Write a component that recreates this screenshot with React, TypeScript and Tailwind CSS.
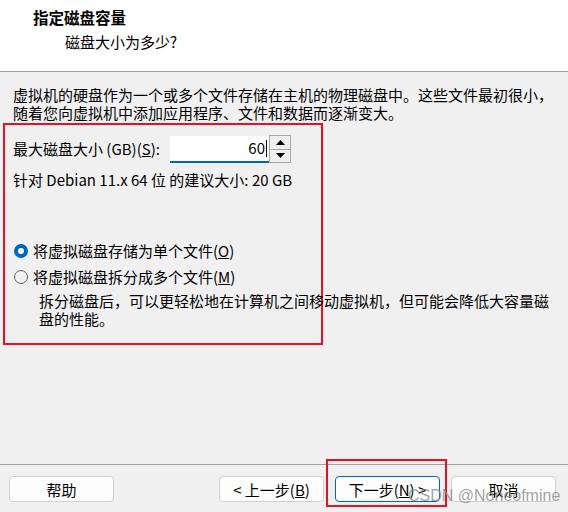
import { useState } from "react";

const font = { fontFamily: '"Noto Sans CJK SC", "Noto Sans", sans-serif' };

function Radio({ checked }: { checked: boolean }) {
	return checked ? (
		<span className="inline-flex h-[14px] w-[14px] items-center justify-center rounded-full bg-[#0067c0]">
			<span className="h-[6px] w-[6px] rounded-full bg-white" />
		</span>
	) : (
		<span className="inline-block h-[14px] w-[14px] rounded-full border border-[#5f5f5f] bg-[#f0f0f0]" />
	);
}

function Btn({ children, primary }: { children: React.ReactNode; primary?: boolean }) {
	return (
		<button
			className={
				"h-[26px] w-[105px] rounded-[4px] border bg-[#fdfdfd] text-[15px] leading-none text-black " +
				(primary ? "border-[#0067c0]" : "border-[#d0d0d0]")
			}
		>
			{children}
		</button>
	);
}

export default function App() {
	const [split, setSplit] = useState(false);
	return (
		<div className="relative flex h-[512px] w-[568px] flex-col overflow-hidden bg-[#f0f0f0] text-black" style={font}>
			<div className="h-[72px] shrink-0 border-b border-[#a0a0a0] bg-white pt-[7px]">
				<p className="pl-[33px] text-[15.5px] font-bold leading-[20px]">指定磁盘容量</p>
				<p className="pl-[65px] pt-[5px] text-[15px] leading-[20px]">磁盘大小为多少?</p>
			</div>

			<div className="flex-1 pt-[14px]">
				<p className="pl-[13px] text-[15px] leading-[18px]">
					虚拟机的硬盘作为一个或多个文件存储在主机的物理磁盘中。这些文件最初很小，
					<br />
					随着您向虚拟机中添加应用程序、文件和数据而逐渐变大。
				</p>

				<div className="ml-[3px] mt-[1px] h-[222px] w-[320px] border-2 border-[#e81123] pl-[8px] pt-[10px]">
					<div className="flex items-center">
						<span className="w-[157px] text-[15px]">
							最大磁盘大小 (GB)(<span className="underline">S</span>):
						</span>
						<div className="flex h-[27px] w-[99px] items-center justify-end border-b-2 border-[#0067c0] bg-white pr-[2px] text-[15px]">
							60<span className="ml-px h-[17px] w-px bg-black" />
						</div>
						<div className="flex h-[28px] w-[22px] flex-col border border-[#a8a8a8] bg-[#f0f0f0]">
							<div className="flex flex-1 items-center justify-center border-b border-[#a8a8a8]">
								<svg width="9" height="5" viewBox="0 0 9 5">
									<path d="M0 5 L4.5 0 L9 5Z" fill="#000" />
								</svg>
							</div>
							<div className="flex flex-1 items-center justify-center">
								<svg width="9" height="5" viewBox="0 0 9 5">
									<path d="M0 0 L4.5 5 L9 0Z" fill="#000" />
								</svg>
							</div>
						</div>
					</div>
					<p className="pt-[7px] text-[15px] leading-[20px]">针对 Debian 11.x 64 位 的建议大小: 20 GB</p>

					<div className="pt-[48px]">
						<label className="flex h-[26px] cursor-pointer items-center gap-[5px] pl-[1px]" onClick={() => setSplit(false)}>
							<Radio checked={!split} />
							<span className="text-[15px]">
								将虚拟磁盘存储为单个文件(<span className="underline">O</span>)
							</span>
						</label>
						<label className="flex h-[26px] cursor-pointer items-center gap-[5px] pl-[1px]" onClick={() => setSplit(true)}>
							<Radio checked={split} />
							<span className="text-[15px]">
								将虚拟磁盘拆分成多个文件(<span className="underline">M</span>)
							</span>
						</label>
						<p className="w-[560px] pl-[26px] pt-[2px] text-[15px] leading-[18px]">
							拆分磁盘后，可以更轻松地在计算机之间移动虚拟机，但可能会降低大容量磁
							<br />
							盘的性能。
						</p>
					</div>
				</div>
			</div>

			<div className="flex h-[48px] shrink-0 items-start border-t border-[#a0a0a0] pl-[9px] pt-[11px]">
				<Btn>帮助</Btn>
				<div className="ml-[105px]">
					<Btn>
						&lt; 上一步(<span className="underline">B</span>)
					</Btn>
				</div>
				<div className="ml-[11px]">
					<Btn primary>
						下一步(<span className="underline">N</span>) &gt;
					</Btn>
				</div>
				<div className="ml-[11px]">
					<Btn>取消</Btn>
				</div>
			</div>

			<div className="pointer-events-none absolute left-[326px] top-[459px] h-[48px] w-[121px] border-2 border-[#e81123]" />
			<span
				className="pointer-events-none absolute left-[408px] top-[484px] text-[16px] text-[#8a8a8a]/80"
				style={{ fontFamily: '"Liberation Sans", Arial, sans-serif' }}
			>
				CSDN @Noneofmine
			</span>
		</div>
	);
}
